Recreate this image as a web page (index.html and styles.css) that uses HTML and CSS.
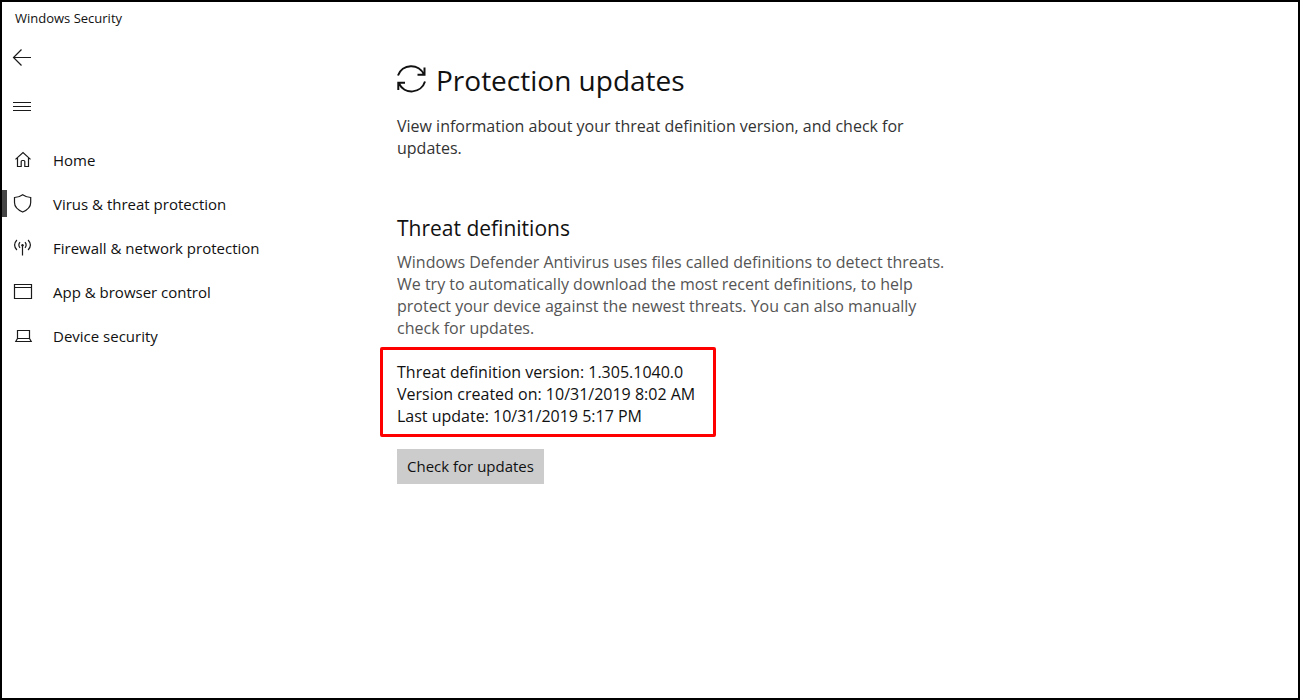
FILE: index.html
```
<!DOCTYPE html>
<html lang="en">
<head>
    <meta charset="UTF-8">
    <meta name="viewport" content="width=device-width, initial-scale=1.0">
    <title>Windows Security</title>
    <link rel="stylesheet" href="styles.css">
</head>
<body>
<div class="window">
    <aside class="sidebar">
        <div class="titlebar">Windows Security</div>
        <button type="button" class="icon-button" aria-label="Back">
            <svg width="20" height="20" viewBox="0 0 20 20"><path d="M1.5 9.5H19M9.5 1.5L1.5 9.5L9.5 17.5"/></svg>
        </button>
        <button type="button" class="icon-button menu-button" aria-label="Open navigation">
            <svg width="20" height="20" viewBox="0 0 20 20"><path d="M1 6.5H19M1 10.5H19M1 14.5H19"/></svg>
        </button>
        <nav>
            <ul class="nav-list">
                <li><a href="#home">
                    <svg width="20" height="20" viewBox="0 0 20 20"><path d="M2.5 9.4L10 2.6L17.5 9.4M4.5 8V16.5H8.2V11.5Q8.2 10.5 9.2 10.5H10.8Q11.8 10.5 11.8 11.5V16.5H15.5V8"/></svg>
                    Home</a></li>
                <li><a href="#virus" class="active">
                    <svg width="20" height="20" viewBox="0 0 20 20"><path d="M9.7 .8Q13.5 3.4 17.7 3.5V8.5Q17.7 14.5 9.7 18Q1.5 14.5 1.5 8.5V3.5Q6 3.4 9.7 .8Z"/></svg>
                    Virus &amp; threat protection</a></li>
                <li><a href="#firewall">
                    <svg width="20" height="20" viewBox="0 0 20 20"><path d="M9.5 8V17.5M7 4.2Q4.7 7 7 9.8M12 4.2Q14.3 7 12 9.8M3.9 2Q-.7 7 3.9 12M15.1 2Q19.7 7 15.1 12"/><circle class="dot" cx="9.5" cy="7.3" r="1.2"/></svg>
                    Firewall &amp; network protection</a></li>
                <li><a href="#browser">
                    <svg width="20" height="20" viewBox="0 0 20 20"><path d="M1.5 2.5H18.5V16.5H1.5ZM1.5 5.5H18.5"/></svg>
                    App &amp; browser control</a></li>
                <li><a href="#device">
                    <svg width="20" height="20" viewBox="0 0 20 20"><path d="M4.5 4.5H16.5V12.5H4.5ZM4.5 12.5L2.8 15.5H18.2L16.5 12.5"/></svg>
                    Device security</a></li>
            </ul>
        </nav>
    </aside>
    <main class="content">
        <h1>
            <svg width="30" height="30" viewBox="0 0 30 30"><path d="M1 10.5A14 14 0 0 1 27 9.5M27.5 2.5V9.8H20.5M28 16.5A14 14 0 0 1 2 18.5M1.3 25V17.8H8"/></svg>
            Protection updates
        </h1>
        <p class="intro">View information about your threat definition version, and check for updates.</p>
        <h2>Threat definitions</h2>
        <p class="description">Windows Defender Antivirus uses files called definitions to detect threats. We try to automatically download the most recent definitions, to help protect your device against the newest threats. You can also manually check for updates.</p>
        <ul class="version-info">
            <li>Threat definition version: 1.305.1040.0</li>
            <li>Version created on: 10/31/2019 8:02 AM</li>
            <li>Last update: 10/31/2019 5:17 PM</li>
        </ul>
        <button type="button" class="check-button">Check for updates</button>
    </main>
</div>
</body>
</html>
```
FILE: styles.css
```
* {
    box-sizing: border-box;
}
body {
    margin: 0;
    font-family: "Open Sans", "Noto Sans", sans-serif;
    font-size: 16px;
    color: #111;
    background-color: #fff;
}
.window {
    display: grid;
    grid-template-columns: 395px 1fr;
    min-height: 100vh;
    border: 2px solid #000;
}
ul {
    list-style: none;
    margin: 0;
    padding: 0;
}
svg {
    flex: none;
    fill: none;
    stroke: #1a1a1a;
    stroke-width: 1.2;
}
.titlebar {
    height: 34px;
    padding-left: 13px;
    font-size: 13px;
    line-height: 32px;
}
.icon-button {
    display: flex;
    align-items: center;
    width: 44px;
    height: 44px;
    padding: 0 10px;
    border: none;
    background: none;
    cursor: pointer;
}
.menu-button {
    margin: 4px 0 10px;
}
.nav-list a {
    display: flex;
    align-items: center;
    gap: 20px;
    height: 44px;
    padding-left: 11px;
    color: #111;
    font-size: 15px;
    text-decoration: none;
    position: relative;
}
.nav-list .active::before {
    content: "";
    position: absolute;
    left: 0;
    top: 8px;
    width: 5px;
    height: 27px;
    background-color: #444;
}
.dot {
    fill: #1a1a1a;
    stroke: none;
}
.content {
    max-width: 556px;
    padding-top: 56px;
}
h1 {
    display: flex;
    align-items: center;
    gap: 9px;
    height: 44px;
    margin: 0 0 13px;
    font-size: 28px;
    font-weight: 400;
}
h1 svg {
    stroke: #111;
    stroke-width: 2;
}
h2 {
    margin: 54px 0 8px;
    font-size: 21px;
    font-weight: 400;
    line-height: 30px;
}
p {
    margin: 0;
    line-height: 22px;
}
.intro {
    color: #333;
}
.description {
    color: #555;
}
.version-info {
    width: 336px;
    margin: 8px 0 12px -17px;
    padding: 11px 14px 7px;
    border: 3px solid #f00;
    border-radius: 2px;
    line-height: 22px;
}
.check-button {
    height: 35px;
    padding: 0 10px 2px;
    border: none;
    background-color: #ccc;
    color: #111;
    font-family: inherit;
    font-size: 15px;
    cursor: pointer;
}
```
